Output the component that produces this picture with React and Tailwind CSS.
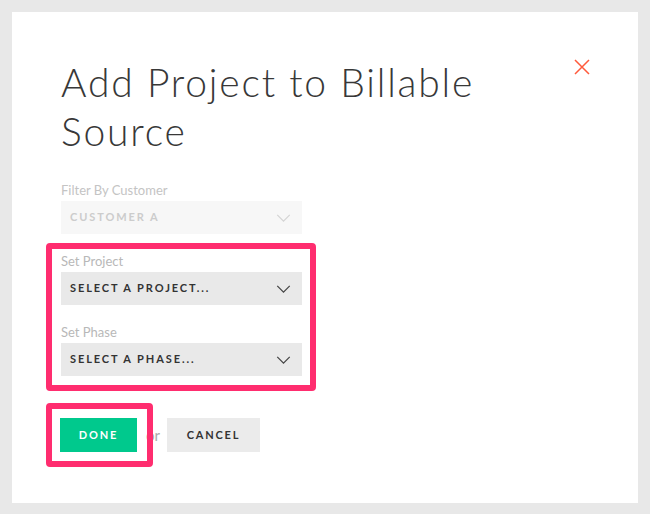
import React from "react";

const font = { fontFamily: "Lato, 'Open Sans', sans-serif" };

const Chevron = ({ className }) => (
  <svg viewBox="0 0 16 9" className={className} fill="none" stroke="currentColor" strokeWidth="1.4">
    <path d="M1 1l7 7 7-7" />
  </svg>
);

const SelectBox = ({ label, value, disabled }) => (
  <div className="flex flex-col">
    <div className={`text-[13px] leading-[16px] ${disabled ? "text-[#c4c4c4]" : "text-[#b8b8b8]"}`}>
      {label}
    </div>
    <div
      className={`mt-[3px] flex h-[33px] w-[241px] items-center justify-between pl-[9px] pr-[11px] ${
        disabled ? "bg-[#f7f7f7] text-[#cccccc]" : "bg-[#e9e9e9] text-[#333333]"
      }`}
    >
      <span className="text-[11px] font-bold tracking-[1.9px]">{value}</span>
      <Chevron className={`h-[8px] w-[15px] ${disabled ? "text-[#d4d4d4]" : "text-[#444444]"}`} />
    </div>
  </div>
);

export default function App() {
  return (
    <div className="min-h-[514px] bg-[#e8e8e8] p-[12px]" style={font}>
      <div className="relative h-[491px] w-[626px] bg-white pl-[49px] pt-[46px]">
        <button className="absolute right-[48px] top-[47px] text-[#ff5a3c]">
          <svg viewBox="0 0 16 16" className="h-[16px] w-[16px]" fill="none" stroke="currentColor" strokeWidth="1.5">
            <path d="M1 1l14 14M15 1L1 15" />
          </svg>
        </button>

        <h1 className="w-[470px] text-[39px] font-light leading-[49px] tracking-[1.8px] text-[#383838]">
          Add Project to Billable Source
        </h1>

        <div className="mt-[26px]">
          <SelectBox label="Filter By Customer" value="CUSTOMER A" disabled />
        </div>

        <div className="relative mt-[19px] flex flex-col gap-[19px]">
          <div className="pointer-events-none absolute -left-[15px] -top-[10px] h-[148px] w-[270px] rounded-[4px] border-[6px] border-[#ff2d6f]" />
          <SelectBox label="Set Project" value="SELECT A PROJECT..." />
          <SelectBox label="Set Phase" value="SELECT A PHASE..." />
        </div>

        <div className="mt-[42px] flex items-center">
          <button className="h-[34px] w-[77px] -translate-x-[1px] bg-[#00c98d] text-[11px] font-bold tracking-[1.8px] text-white">
            DONE
          </button>
          <span className="ml-[8px] text-[15px] text-[#aaaaaa]">or</span>
          <button className="ml-[7px] h-[34px] w-[93px] bg-[#ebebeb] text-[11px] font-bold tracking-[1.8px] text-[#333333]">
            CANCEL
          </button>
        </div>
        <div className="pointer-events-none absolute left-[34px] top-[391px] h-[64px] w-[107px] rounded-[4px] border-[6px] border-[#ff2d6f]" />
      </div>
    </div>
  );
}
